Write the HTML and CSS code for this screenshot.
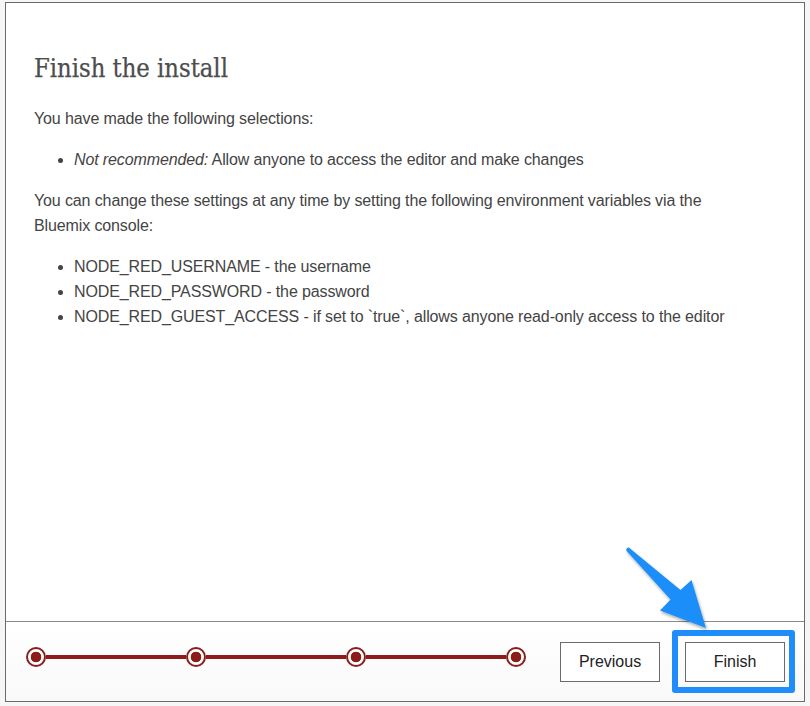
FILE: index.html
```html
<!DOCTYPE html>
<html>
<head>
<meta charset="utf-8">
<title>Finish the install</title>
<link rel="stylesheet" href="styles.css">
</head>
<body>
<div class="dialog">
  <div class="content">
    <h1 class="title">Finish the install</h1>
    <p>You have made the following selections:</p>
    <ul>
      <li><em>Not recommended:</em> Allow anyone to access the editor and make changes</li>
    </ul>
    <p>You can change these settings at any time by setting the following environment variables via the Bluemix console:</p>
    <ul>
      <li>NODE_RED_USERNAME - the username</li>
      <li>NODE_RED_PASSWORD - the password</li>
      <li>NODE_RED_GUEST_ACCESS - if set to `true`, allows anyone read-only access to the editor</li>
    </ul>
  </div>
  <div class="footer">
    <div class="progress">
      <span class="step"></span>
      <span class="bar"></span>
      <span class="step"></span>
      <span class="bar"></span>
      <span class="step"></span>
      <span class="bar"></span>
      <span class="step"></span>
    </div>
    <div class="buttons">
      <button class="btn">Previous</button>
      <div class="highlight"><button class="btn">Finish</button></div>
    </div>
  </div>
  <svg class="arrow" width="120" height="120" viewBox="600 530 120 120">
    <defs>
      <filter id="sh" x="-30%" y="-30%" width="160%" height="160%">
        <feDropShadow dx="1" dy="2" stdDeviation="1.5" flood-color="#000" flood-opacity="0.35"/>
      </filter>
    </defs>
    <path filter="url(#sh)" fill="#1f8efa" d="M626.2 550.6 Q626 547.8 628.8 547.4 L680.5 590 L691.5 580 L706 628 L660 610.5 L670.5 599.5 Z"/>
  </svg>
</div>
</body>
</html>
```
FILE: styles.css
```css
html, body {
  margin: 0;
  padding: 0;
  background: #fff;
}
body {
  width: 810px;
  height: 706px;
  overflow: hidden;
  background: #f6f6f6;
}
.dialog {
  position: relative;
  box-sizing: border-box;
  margin: 2px 0 0 5px;
  width: 800px;
  height: 700px;
  border: 1px solid #6b6b6b;
  background: #fff;
  display: flex;
  flex-direction: column;
  font-family: "Liberation Sans", Arial, Helvetica, sans-serif;
  color: #444;
}
.content {
  flex: 1;
  padding: 51px 60px 0 28px;
  font-size: 16px;
  line-height: 25px;
  letter-spacing: -0.12px;
}
.title {
  margin: 0 0 22px;
  font-family: "DejaVu Serif Condensed", "DejaVu Serif", serif;
  font-weight: normal;
  font-size: 25.3px;
  line-height: 30px;
  letter-spacing: 0;
  color: #4d4d4d;
  -webkit-text-stroke: 0.25px #4d4d4d;
}
.content p {
  margin: 0 0 16px;
}
.content ul {
  margin: 0 0 16px;
  padding-left: 40px;
}
.footer {
  height: 79px;
  border-top: 1px solid #8a8a8a;
  background: linear-gradient(#fff, #f9f9f9);
  display: flex;
  justify-content: space-between;
  align-items: flex-start;
  padding: 0 9px 0 20px;
}
.progress {
  display: flex;
  align-items: center;
  margin-top: 25px;
}
.step {
  box-sizing: border-box;
  width: 20px;
  height: 20px;
  border-radius: 50%;
  border: 2px solid #8b1e1a;
  background: radial-gradient(circle, #8b1e1a 0 5px, #fff 5.6px);
  flex: none;
}
.bar {
  width: 140px;
  height: 4px;
  background: #8b1e1a;
  flex: none;
}
.buttons {
  display: flex;
  align-items: center;
  gap: 12px;
  margin-top: 8px;
}
.btn {
  box-sizing: border-box;
  width: 100px;
  height: 40px;
  border: 1px solid #6b6b6b;
  background: #fff;
  font-family: "Liberation Sans", Arial, Helvetica, sans-serif;
  font-size: 16px;
  color: #222;
  padding: 0;
}
.highlight {
  border: 6px solid #1f8efa;
  border-radius: 3px;
  padding: 6px 4px 5px 7px;
  display: flex;
}
.arrow {
  position: absolute;
  left: 594px;
  top: 527px;
  overflow: visible;
}
```
